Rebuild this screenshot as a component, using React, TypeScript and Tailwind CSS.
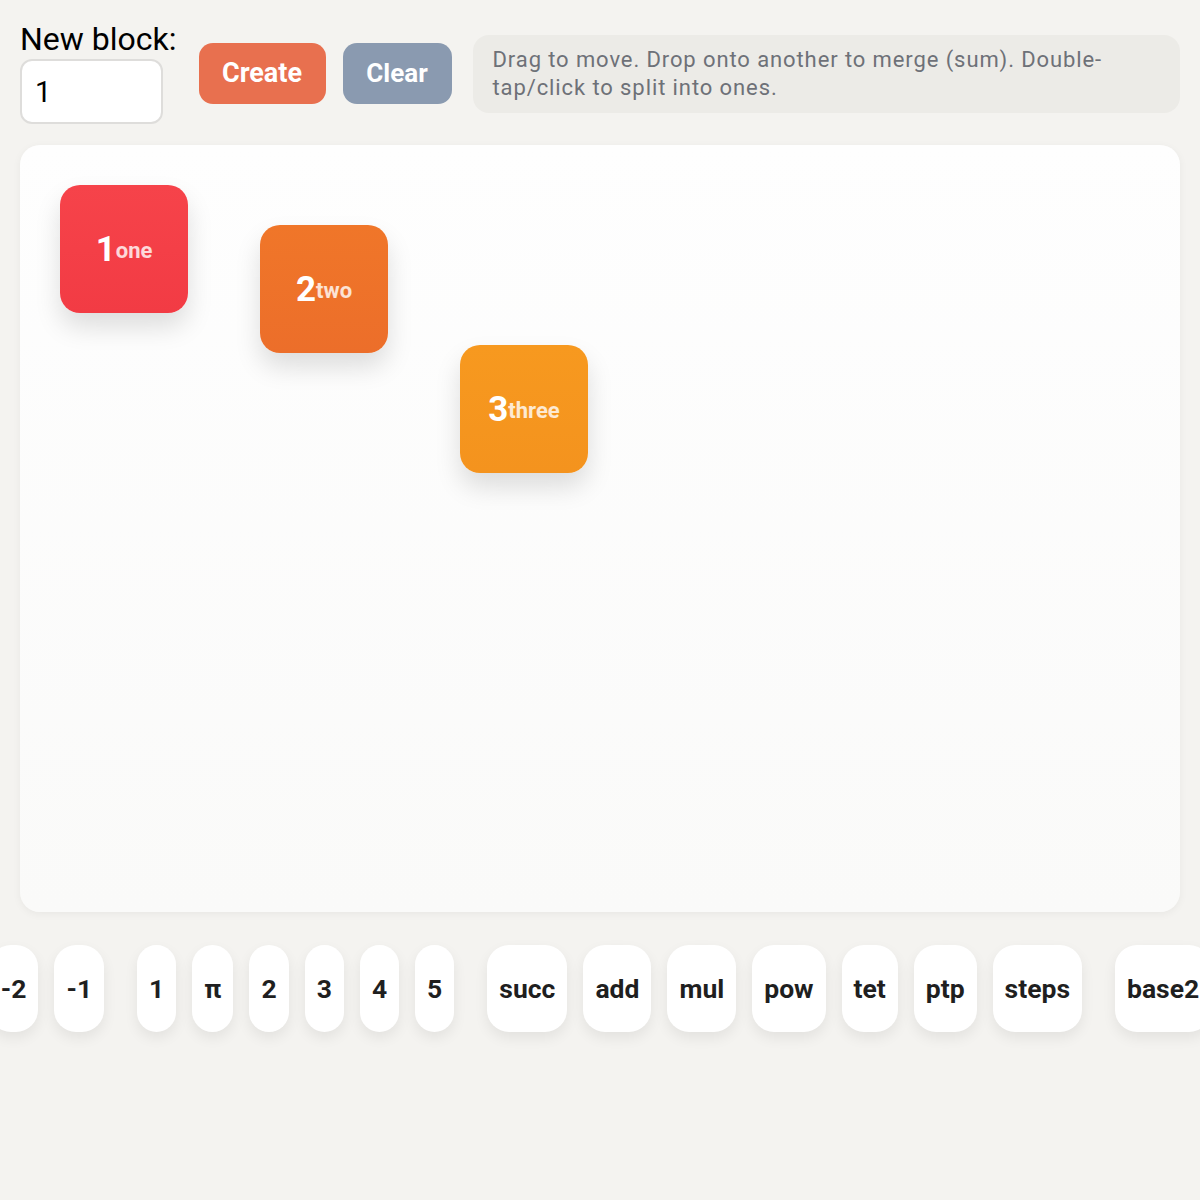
import React, { useState } from 'react';

type Block = { id: number; value: number; word: string; x: number; y: number; bg: string };

const startBlocks: Block[] = [
    { id: 1, value: 1, word: 'one', x: 40, y: 40, bg: 'bg-gradient-to-b from-[#f6434a] to-[#f23b44]' },
    { id: 2, value: 2, word: 'two', x: 240, y: 80, bg: 'bg-gradient-to-b from-[#f07629] to-[#ec6e2a]' },
    { id: 3, value: 3, word: 'three', x: 440, y: 200, bg: 'bg-gradient-to-b from-[#f7991f] to-[#f4931e]' },
];

// palette groups, spaced apart a bit more than the chips inside a group
const palette: string[][] = [
    ['-2', '-1'],
    ['1', 'π', '2', '3', '4', '5'],
    ['succ', 'add', 'mul', 'pow', 'tet', 'ptp', 'steps'],
    ['base2'],
];

const App: React.FC = () => {
    const [amount, setAmount] = useState('1');
    const [blocks, setBlocks] = useState<Block[]>(startBlocks);

    return (
        <div className="min-h-[1200px] bg-[#f4f3f0] font-['Roboto',sans-serif] overflow-hidden">
            <div className="px-5 pt-[23px]">
                {/* toolbar */}
                <div className="flex items-center">
                    <label className="flex flex-col">
                        <span className="text-[32px] leading-[33px] text-black">New block:</span>
                        <input
                            className="mt-[3px] w-[143px] h-[65px] rounded-[12px] border-2 border-[#dedddb] bg-white px-[13px] text-[29px] text-black outline-none"
                            value={amount}
                            onChange={(e) => setAmount(e.target.value)}
                        />
                    </label>
                    <button className="ml-[22px] h-[61px] w-[127px] rounded-[14px] bg-[#e8704f] text-[27px] font-bold text-white">
                        Create
                    </button>
                    <button
                        onClick={() => setBlocks([])}
                        className="ml-[17px] h-[61px] w-[109px] rounded-[14px] bg-[#8a9ab0] text-[26px] font-bold text-white"
                    >
                        Clear
                    </button>
                    <div className="ml-[21px] flex-1 rounded-[16px] bg-[#ecebe7] px-5 py-[11px] text-[22px] leading-[28px] tracking-[0.9px] text-[#6e7178]">
                        Drag to move. Drop onto another to merge (sum). Double-tap/click to split into ones.
                    </div>
                </div>

                {/* canvas */}
                <div className="relative mt-[21px] h-[767px] rounded-[20px] bg-gradient-to-b from-[#fefefe] to-[#fafaf9] shadow-[0_2px_8px_rgba(0,0,0,0.05)]">
                    {blocks.map((b) => (
                        <div
                            key={b.id}
                            className={`absolute flex h-32 w-32 items-center justify-center rounded-[20px] ${b.bg} shadow-[0_14px_26px_rgba(0,0,0,0.13)]`}
                            style={{ left: b.x, top: b.y }}
                        >
                            <span className="text-[35px] font-bold leading-none text-white">{b.value}</span>
                            <span className="mt-[4px] text-[22px] font-bold leading-none text-white/80">{b.word}</span>
                        </div>
                    ))}
                </div>
            </div>

            {/* palette */}
            <div className="mt-[33px] flex justify-center gap-[33px]">
                {palette.map((group, gi) => (
                    <div key={gi} className="flex shrink-0 gap-4">
                        {group.map((label) => (
                            <div
                                key={label}
                                className="flex h-[87px] shrink-0 items-center rounded-[22px] bg-white px-3 text-[26.5px] font-bold text-[#1f1f1f] shadow-[0_6px_14px_rgba(0,0,0,0.07)]"
                            >
                                {label}
                            </div>
                        ))}
                    </div>
                ))}
            </div>
        </div>
    );
};

export default App;
